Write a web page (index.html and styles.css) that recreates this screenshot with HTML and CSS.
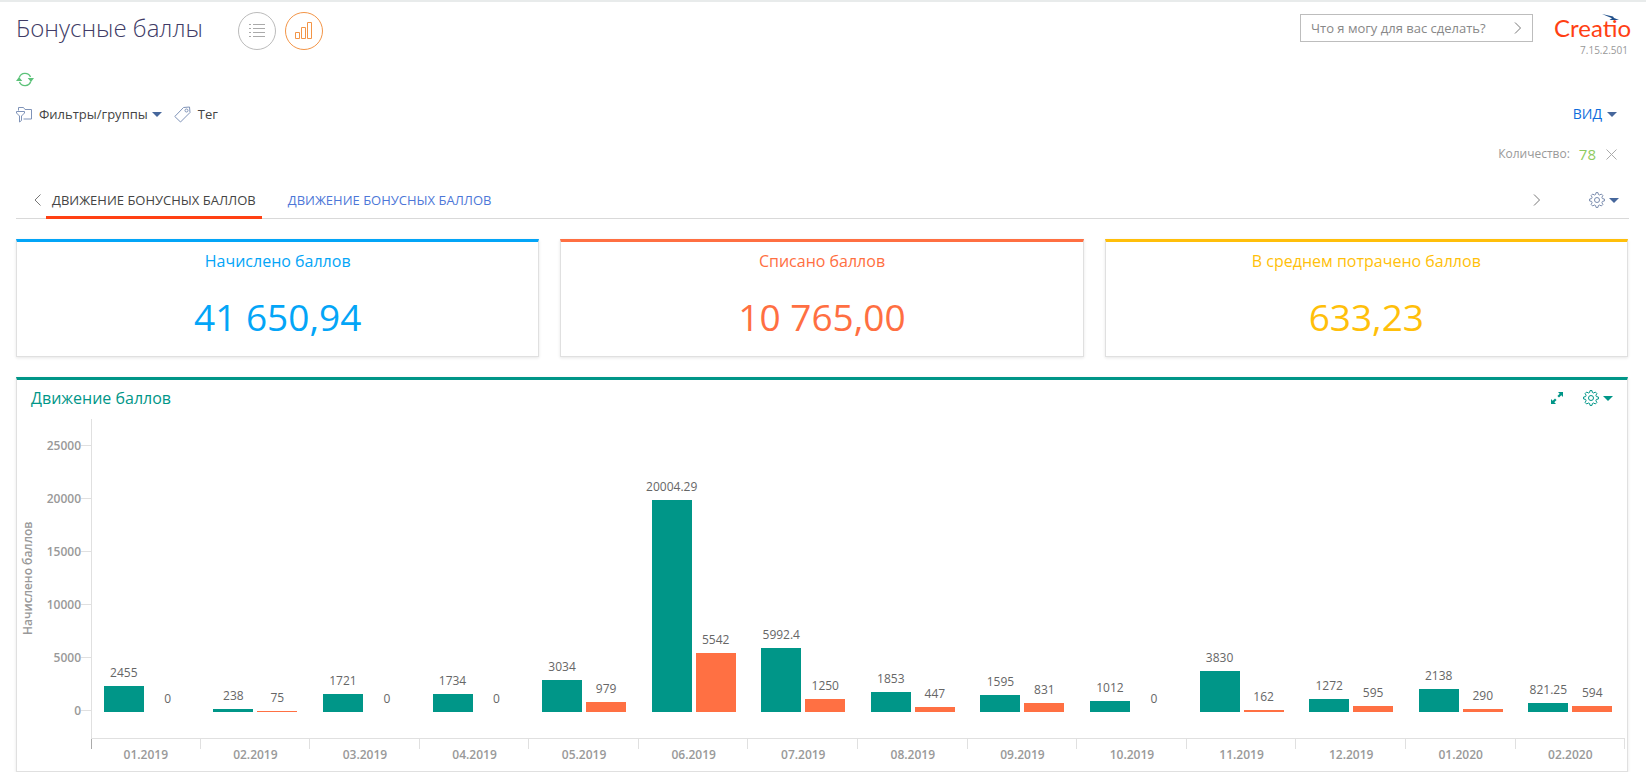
FILE: index.html
```html
<!DOCTYPE html>
<html lang="ru">
<head>
<meta charset="utf-8">
<title>Бонусные баллы</title>
<link rel="stylesheet" href="styles.css">
</head>
<body>
<svg class="defs" aria-hidden="true">
  <symbol id="gear" viewBox="0 0 16 16">
    <path d="M6.600 2.500 7 .6h2l.4 1.900 1.300.5 1.600-1 1.600 1.600-1 1.600.5 1.400 2 .4v2l-2 .4-.5 1.400 1 1.600-1.600 1.600-1.600-1-1.300.5L9 15.400H7l-.4-1.900-1.300-.5-1.600 1-1.600-1.600 1-1.600L2.600 9.400l-2-.4V7l2-.4.5-1.400-1-1.600L3.700 2l1.600 1z" fill="none" stroke="currentColor" stroke-linejoin="round"/>
    <circle cx="8" cy="8" r="2.500" fill="none" stroke="currentColor"/>
  </symbol>
</svg>
<header class="header">
  <h1 class="page-title">Бонусные баллы</h1>
  <button class="round" type="button" aria-label="Список"><svg width="16" height="14" viewBox="0 0 16 14"><path d="M0 .5h2M4 .5h12M0 4.500h2M4 4.500h12M0 8.500h2M4 8.500h12M0 12.500h2M4 12.500h12" stroke="currentColor" fill="none"/></svg></button>
  <button class="round active" type="button" aria-label="Аналитика"><svg width="18" height="18" viewBox="0 0 18 18"><path d="M.5 10.500h4v6h-4zM6.500 5.500h4v11h-4zM12.500.5h4v16h-4z" stroke="currentColor" fill="none"/></svg></button>
  <form class="search">
    <input class="search-input" type="text" aria-label="Команда" placeholder="Что я могу для вас сделать?">
    <button class="plain" type="button" aria-label="Выполнить"><svg width="8" height="12" viewBox="0 0 8 12"><path d="M1 .5 6.500 6 1 11.500" stroke="#777" fill="none"/></svg></button>
  </form>
  <div class="brand">
    <div class="logo">Creatio<svg class="bird" width="17" height="7" viewBox="0 0 17 7"><path d="M0 0 11 2.500 12 4 17 6H7.500L10 4.300z" fill="#1f4f8a"/></svg></div>
    <div class="version">7.15.2.501</div>
  </div>
</header>
<div class="refresh-row">
  <button class="plain refresh" type="button" aria-label="Обновить"><svg width="18" height="15" viewBox="0 0 18 15"><path d="M3.300 5.500A6 6 0 0 1 14.500 5M14.700 9.500A6 6 0 0 1 3.500 10" stroke="currentColor" stroke-width="1.400" fill="none"/><path d="M0 9l3-4 3.300 4zM11.700 6H18l-3 4z" fill="currentColor"/></svg></button>
</div>
<div class="tools">
  <button class="plain tool" type="button"><svg class="tool-icon" width="16" height="17" viewBox="0 0 16 17"><path d="M2.500 4.500v-3h5l1.500 2h6.500v9.500H7.500M.5 5.500h8v1.500L5.500 10v4.500l-2 1.500v-6L.5 7z" fill="none" stroke="currentColor"/></svg>Фильтры/группы<span class="caret"></span></button>
  <button class="plain tool" type="button"><svg class="tool-icon" width="17" height="17" viewBox="0 0 17 17"><path d="M9.500 1.500 15.500 1l.5 5.500-9.500 9.500L.8 10.500z" fill="none" stroke="currentColor" stroke-linejoin="round"/><circle cx="12.500" cy="4.500" r="1.500" fill="none" stroke="currentColor"/></svg>Тег</button>
  <button class="plain view" type="button">ВИД<span class="caret"></span></button>
</div>
<div class="count">
  <span>Количество:</span><a class="count-value" href="#">78</a>
  <button class="plain" type="button" aria-label="Убрать"><svg width="11" height="11" viewBox="0 0 11 11"><path d="M.5.5l10 10M10.500.5l-10 10" stroke="#aaa" fill="none"/></svg></button>
</div>
<nav class="tabs">
  <button class="plain prev" type="button" aria-label="Назад"><svg width="8" height="12" viewBox="0 0 8 12"><path d="M6.500.5 1 6l5.500 5.500" stroke="#777" fill="none"/></svg></button>
  <a class="tab current" href="#">ДВИЖЕНИЕ БОНУСНЫХ БАЛЛОВ</a>
  <a class="tab" href="#">ДВИЖЕНИЕ БОНУСНЫХ БАЛЛОВ</a>
  <button class="plain next" type="button" aria-label="Вперёд"><svg width="8" height="12" viewBox="0 0 8 12"><path d="M1 .5 6.500 6 1 11.500" stroke="#777" fill="none"/></svg></button>
  <button class="plain settings" type="button" aria-label="Настройки"><svg width="16" height="16"><use href="#gear"/></svg><span class="caret"></span></button>
</nav>
<main class="board">
  <section class="card blue"><h2 class="card-title">Начислено баллов</h2><p class="value">41 650,94</p></section>
  <section class="card orange"><h2 class="card-title">Списано баллов</h2><p class="value">10 765,00</p></section>
  <section class="card yellow"><h2 class="card-title">В среднем потрачено баллов</h2><p class="value">633,23</p></section>
  <section class="card teal chart-card">
    <div class="chart-head">
      <h2 class="card-title">Движение баллов</h2>
      <button class="plain expand" type="button" aria-label="Развернуть"><svg width="12" height="12" viewBox="0 0 12 12"><path d="M7 0h5v5l-1.700-1.700-2.300 2.300-1.600-1.600 2.300-2.300zM5 12H0V7l1.700 1.700 2.300-2.300 1.600 1.600-2.300 2.300z" fill="currentColor"/></svg></button>
      <button class="plain settings" type="button" aria-label="Настройки диаграммы"><svg width="16" height="16"><use href="#gear"/></svg><span class="caret"></span></button>
    </div>
    <div class="chart">
      <div class="axis-title">Начислено баллов</div>
      <div class="y-axis"><span>25000</span><span>20000</span><span>15000</span><span>10000</span><span>5000</span><span>0</span></div>
      <div class="months">
        <div class="month"><div class="bars"><div class="bar" style="--v:2455"><span>2455</span></div><div class="bar second" style="--v:0"><span>0</span></div></div><div class="label">01.2019</div></div>
        <div class="month"><div class="bars"><div class="bar" style="--v:238"><span>238</span></div><div class="bar second" style="--v:75"><span>75</span></div></div><div class="label">02.2019</div></div>
        <div class="month"><div class="bars"><div class="bar" style="--v:1721"><span>1721</span></div><div class="bar second" style="--v:0"><span>0</span></div></div><div class="label">03.2019</div></div>
        <div class="month"><div class="bars"><div class="bar" style="--v:1734"><span>1734</span></div><div class="bar second" style="--v:0"><span>0</span></div></div><div class="label">04.2019</div></div>
        <div class="month"><div class="bars"><div class="bar" style="--v:3034"><span>3034</span></div><div class="bar second" style="--v:979"><span>979</span></div></div><div class="label">05.2019</div></div>
        <div class="month"><div class="bars"><div class="bar" style="--v:20004.29"><span>20004.29</span></div><div class="bar second" style="--v:5542"><span>5542</span></div></div><div class="label">06.2019</div></div>
        <div class="month"><div class="bars"><div class="bar" style="--v:5992.4"><span>5992.4</span></div><div class="bar second" style="--v:1250"><span>1250</span></div></div><div class="label">07.2019</div></div>
        <div class="month"><div class="bars"><div class="bar" style="--v:1853"><span>1853</span></div><div class="bar second" style="--v:447"><span>447</span></div></div><div class="label">08.2019</div></div>
        <div class="month"><div class="bars"><div class="bar" style="--v:1595"><span>1595</span></div><div class="bar second" style="--v:831"><span>831</span></div></div><div class="label">09.2019</div></div>
        <div class="month"><div class="bars"><div class="bar" style="--v:1012"><span>1012</span></div><div class="bar second" style="--v:0"><span>0</span></div></div><div class="label">10.2019</div></div>
        <div class="month"><div class="bars"><div class="bar" style="--v:3830"><span>3830</span></div><div class="bar second" style="--v:162"><span>162</span></div></div><div class="label">11.2019</div></div>
        <div class="month"><div class="bars"><div class="bar" style="--v:1272"><span>1272</span></div><div class="bar second" style="--v:595"><span>595</span></div></div><div class="label">12.2019</div></div>
        <div class="month"><div class="bars"><div class="bar" style="--v:2138"><span>2138</span></div><div class="bar second" style="--v:290"><span>290</span></div></div><div class="label">01.2020</div></div>
        <div class="month"><div class="bars"><div class="bar" style="--v:821.25"><span>821.25</span></div><div class="bar second" style="--v:594"><span>594</span></div></div><div class="label">02.2020</div></div>
      </div>
    </div>
  </section>
</main>
</body>
</html>
```

FILE: styles.css
```css
* { box-sizing: border-box; }

body {
  margin: 0;
  padding: 0 17px 0 16px;
  border-top: 2px solid #e8ebeb;
  background: #fff;
  color: #444;
  font: 13px/18px "Open Sans", "Noto Sans", sans-serif;
}

h1, h2, p { margin: 0; font-weight: 400; }
a { text-decoration: none; color: inherit; }
svg { display: block; flex: none; }
.defs { position: absolute; width: 0; height: 0; }

.plain {
  display: flex;
  align-items: center;
  padding: 0;
  border: 0;
  background: none;
  color: inherit;
  font: inherit;
}

.caret {
  border: 5px solid transparent;
  border-top-color: #46679c;
  border-bottom: 0;
}

.header { display: flex; align-items: flex-start; padding-top: 10px; }
.page-title {
  margin-right: 35px;
  color: #403b66;
  font-size: 24px;
  font-weight: 300;
  line-height: 32px;
}
.round {
  display: flex;
  align-items: center;
  justify-content: center;
  width: 38px;
  height: 38px;
  margin-right: 9px;
  padding: 0;
  border: 1px solid #bbb;
  border-radius: 50%;
  background: none;
  color: #aaa;
}
.round.active { border-color: #f39547; color: #f39547; }

.search {
  display: flex;
  width: 233px;
  height: 28px;
  margin: 2px 21px 0 auto;
  padding-right: 10px;
  border: 1px solid #bdbdbd;
}
.search-input {
  flex: 1;
  min-width: 0;
  padding: 0 0 0 10px;
  border: 0;
  outline: 0;
  background: none;
  font: inherit;
}
.search-input::placeholder { color: #888; opacity: 1; }

.brand { width: 75px; }
.logo {
  position: relative;
  color: #ff4013;
  font: 400 24px/32px Lato, sans-serif;
}
.bird { position: absolute; top: 2px; right: 10px; }
.version { padding-right: 1px; color: #999; font-size: 10px; line-height: 12px; text-align: right; }

.refresh-row { padding-top: 16px; }
.refresh { color: #5cc279; }

.tools { display: flex; margin-top: 18px; color: #444; }
.tool { margin-right: 12px; }
.tool-icon { margin-right: 7px; color: #7f93b8; }
.tool .caret { margin-left: 4px; }
.view { margin: 0 12px 0 auto; color: #0d6ddc; font-size: 14px; }
.view .caret { margin-left: 5px; }

.count {
  display: flex;
  align-items: center;
  justify-content: flex-end;
  margin: 22px 12px 0 0;
  color: #999;
  font-size: 12px;
}
.count-value { margin: 0 10px 0 9px; color: #8ecb60; font-size: 15px; }

.tabs {
  display: flex;
  align-items: stretch;
  height: 39px;
  margin-top: 17px;
  border-bottom: 1px solid #d9d9d9;
}
.tabs .plain { padding-top: 2px; }
.prev { margin: 0 4px 0 18px; }
.tab {
  margin: 0 20px -1px 0;
  padding: 11px 6px 0;
  color: #4d77d8;
}
.tab.current { border-bottom: 3px solid #ff4013; color: #444; }
.next { margin: 0 48px 0 auto; }
.settings { margin-right: 10px; color: #7a8cae; }
.settings .caret { margin-left: 4px; }

.board {
  display: grid;
  grid-template-columns: repeat(3, 1fr);
  gap: 20px 21px;
  margin: 20px 1px 0 0;
}
.card {
  border: 1px solid #e0e0e0;
  border-top: 3px solid;
  box-shadow: 0 1px 3px #0000001a;
  text-align: center;
}
.card { border-top-color: var(--accent); color: var(--accent); }
.blue { --accent: #03a5f7; }
.orange { --accent: #ff6f42; }
.yellow { --accent: #ffbf0a; }
.teal { --accent: #009688; }
.card-title { padding-top: 9px; font-size: 16px; line-height: 20px; }
.value { padding: 21px 0 14px; font-size: 37px; line-height: 50px; }

.chart-card { grid-column: 1 / -1; padding-bottom: 5px; }
.chart-head { display: flex; align-items: center; height: 36px; margin-bottom: 3px; padding: 0 14px; }
.chart-head .card-title { flex: 1; padding: 0; text-align: left; }
.expand { margin-right: 20px; }
.chart-head .settings { margin: 0; color: var(--accent); }
.chart-head .caret { border-top-color: var(--accent); }

.chart { display: flex; padding-right: 2px; color: #999; font-size: 12px; }
.axis-title {
  height: 318px;
  padding: 0 2px 0 2px;
  writing-mode: vertical-rl;
  transform: rotate(180deg);
  font-weight: 600;
}
.y-axis { width: 52px; font-weight: 600; }
.y-axis span {
  display: flex;
  align-items: center;
  justify-content: flex-end;
  height: 53px;
}
.y-axis span::after { content: ""; width: 10px; border-top: 1px solid #e0e0e0; }

.months { display: flex; flex: 1; }
.month { flex: 1; min-width: 0; }
.bars {
  display: flex;
  align-items: flex-end;
  justify-content: center;
  gap: 4px;
  height: 320px;
  padding-bottom: 26px;
  border-bottom: 1px solid #e0e0e0;
}
.month:first-child .bars { box-shadow: inset 1px 0 #e0e0e0; }
.bar {
  display: flex;
  justify-content: center;
  width: 40px;
  height: calc(var(--v) * 265px / 25000);
  background: #009688;
}
.second { background: #ff7043; }
.bar span {
  height: 18px;
  margin-top: -22px;
  color: #666;
}
.label {
  height: 27px;
  padding-top: 7px;
  background: linear-gradient(#e0e0e0, #e0e0e0) right top / 1px 10px no-repeat;
  font-weight: 600;
}
.month:first-child .label {
  background:
    linear-gradient(#e0e0e0, #e0e0e0) right top / 1px 10px no-repeat,
    linear-gradient(#aaa, #aaa) left top / 1px 10px no-repeat;
}
```
